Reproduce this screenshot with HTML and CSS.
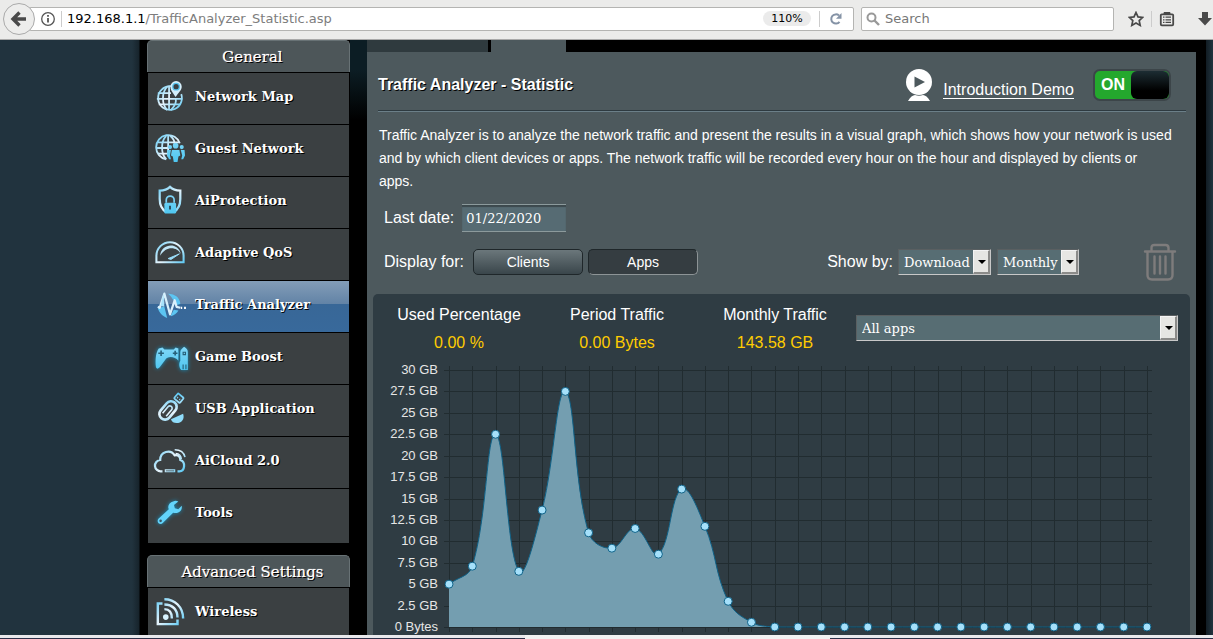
FILE: index.html
```html
<!DOCTYPE html>
<html lang="en">
<head>
<meta charset="utf-8">
<title>Traffic Analyzer - Statistic</title>
<link rel="stylesheet" href="styles.css">
</head>
<body>
<svg class="defs" width="0" height="0" aria-hidden="true">
  <defs>
    <linearGradient id="ice" x1="0" y1="0" x2="32" y2="32" gradientUnits="userSpaceOnUse">
      <stop offset="0" stop-color="#4cc4f4"/><stop offset=".5" stop-color="#e8f4fc"/><stop offset="1" stop-color="#3fc0f2"/>
    </linearGradient>
    <linearGradient id="sky" x1="0" y1="0" x2="0" y2="32" gradientUnits="userSpaceOnUse">
      <stop offset="0" stop-color="#8fdcfa"/><stop offset="1" stop-color="#4cc6f0"/>
    </linearGradient>
  </defs>
</svg>

<header class="toolbar">
  <button class="back" aria-label="Back">
    <svg width="18" height="18" viewBox="0 0 18 18"><path d="M9.500 2.500L3 9l6.500 6.500M3.500 9H16" fill="none" stroke="#4a4a4a" stroke-width="3.400"/></svg>
  </button>
  <div class="urlbar">
    <svg class="info" width="16" height="16" viewBox="0 0 16 16"><circle cx="8" cy="8" r="6.300" fill="none" stroke="#555" stroke-width="1.300"/><path d="M8 7v4.500M8 4v1.800" stroke="#555" stroke-width="1.800"/></svg>
    <span class="divider"></span>
    <p class="url"><b>192.168.1.1</b>/TrafficAnalyzer_Statistic.asp</p>
    <button class="zoom">110%</button>
    <span class="divider"></span>
    <button class="plain reload" aria-label="Reload">
      <svg width="14" height="14" viewBox="0 0 14 14"><path d="M10.500 9.800A4.600 4.600 0 1 1 10 3.600" fill="none" stroke="#8593a6" stroke-width="2"/><path d="M12.500 1v5.800H7z" fill="#8593a6"/></svg>
    </button>
  </div>
  <label class="search">
    <svg width="14" height="14" viewBox="0 0 14 14"><circle cx="5.500" cy="5.500" r="4" fill="none" stroke="#999" stroke-width="2"/><path d="M8.500 8.500L13 13" stroke="#999" stroke-width="2.400"/></svg>
    <input type="text" placeholder="Search" aria-label="Search">
  </label>
  <div class="tools">
    <button class="plain" aria-label="Bookmark">
      <svg width="16" height="16" viewBox="0 0 16 16"><path d="M8 1.500l2 4.400 4.700.5-3.500 3.200 1 4.800L8 12l-4.200 2.400 1-4.800L1.300 6.400 6 5.900z" fill="none" stroke="#484848" stroke-width="1.700"/></svg>
    </button>
    <span class="divider"></span>
    <button class="plain" aria-label="Library">
      <svg width="16" height="16" viewBox="0 0 16 16"><path d="M5 3V1.500h6V3" fill="#484848" stroke="#484848"/><rect x="1.800" y="3.300" width="12.400" height="11" rx="1" fill="none" stroke="#484848" stroke-width="1.800"/><path d="M4 6.200h1.500M6.500 6.200H12M4 8.800h1.500M6.500 8.800H12M4 11.400h1.500M6.500 11.400H12" stroke="#484848" stroke-width="1.200"/></svg>
    </button>
    <button class="plain downloads" aria-label="Downloads">
      <svg width="16" height="16" viewBox="0 0 16 16"><path d="M5 1h6v6h4l-7 7.500L1 7h4z" fill="#4a4a4a"/></svg>
    </button>
  </div>
</header>

<div class="page">
  <nav class="sidebar">
    <section class="menu">
      <h2>General</h2>
      <a href="#"><svg class="icon" viewBox="0 0 32 32"><g fill="none" stroke="url(#ice)" stroke-width="1.900"><path d="M17 5.500A12.700 12.700 0 1 0 28 14"/><path d="M13 6c-6 6-6 19 0 25M17 31c4-4 6-9 5-12M3 13h14M2 19h27M4 25h23M15 5v26"/></g><path d="M22 17c-3-5-5.500-7-5.500-11a6 6 0 0 1 12 0c0 4-3.500 6-6.500 11z" fill="#d5effb"/><circle cx="22.500" cy="6" r="3.500" fill="#3a4043" stroke="#58c4f0" stroke-width="1.400"/></svg>Network Map</a>
      <a href="#"><svg class="icon" viewBox="0 0 32 32"><g fill="none" stroke="url(#ice)" stroke-width="1.900"><path d="M12 28A13 13 0 1 1 26.500 11"/><path d="M12 3c-6 6-6 19 0 25M16 3c4 3 5 6 5 9M3 10h23M1 16h12M3 22h10M14 3v22"/></g><g fill="url(#sky)"><circle cx="22" cy="13.500" r="3"/><circle cx="16" cy="15" r="2.200"/><circle cx="28.500" cy="15" r="2.200"/><path d="M18 18h8l1 6-2 1-1 6h-4l-1-6-2-1zM13 18h4l-1 6 1 4h-2l-2-4zM27.500 18h4l.500 6-2 4h-2l1-4z"/></g></svg>Guest Network</a>
      <a href="#"><svg class="icon" viewBox="0 0 32 32"><path d="M12 29C7 26 5 21 5 15V6c5 0 8-1 11-4 3 3 6 4 11 4v9c0 6-2 11-7 14" fill="none" stroke="url(#ice)" stroke-width="2.400"/><path d="M12 19v-3a4.200 4.200 0 0 1 8.400 0v3" fill="none" stroke="#7dd3f7" stroke-width="1.800"/><rect x="10" y="19" width="12.500" height="11.500" rx="1.500" fill="url(#sky)"/><path d="M16 22v4" stroke="#2c4a5a" stroke-width="2"/></svg>AiProtection</a>
      <a href="#"><svg class="icon" viewBox="0 0 32 32"><path d="M1.500 27v-7a14.500 14.500 0 0 1 29 0v7z" fill="none" stroke="url(#ice)" stroke-width="2.200"/><path d="M5.500 20c1-13 19-15 22-2-4-8-16-9-22 2z" fill="#bfe6f8"/><path d="M14 23l12-5-9 6z" fill="#9adcf8" stroke="#9adcf8"/></svg>Adaptive QoS</a>
      <a href="#" class="current"><svg class="icon" viewBox="0 0 32 32"><path d="M14 5a12 12 0 0 1 13 11l-4 1-6-9zM3 20l7-1 3 12C8 29 4 25 3 20zM17 28l3-6 5 1c-2 3-4 5-8 6z" fill="#5cc5f2"/><path d="M3 19l2 1L10 5l6 22 5-15 2 7 4 1" fill="none" stroke="#d8f0fc" stroke-width="2.400" stroke-linejoin="round"/><path d="M9 5l-3 13 4 1z" fill="#a7e2fb"/><path d="M27.500 20h1.500M31 20h2" stroke="#fff" stroke-width="2.400"/></svg>Traffic Analyzer</a>
      <a href="#"><svg class="icon glow" viewBox="0 0 32 32"><path d="M1 28c-1-8 0-16 3-20l4-1 2 2h10l2-2 3 1v13c-4-5-12-5-14-1l-6 8c-2 2-3 2-4 0z" fill="url(#sky)"/><path d="M27 21V12c0-3 2-4 4-6 3 2 4 3 4 6v19h-7c-2-2-3-7-1-10z" fill="url(#sky)"/><path d="M3.500 13h6M6.500 10v6M19 13h5M21.500 10.500v5" stroke="#27617a" stroke-width="1.700"/><path d="M26 8v13M30 12h2.500v2.500H30zM30 25v5M33 25v5" fill="none" stroke="#27617a" stroke-width="1.200"/></svg>Game Boost</a>
      <a href="#"><svg class="icon" viewBox="0 0 32 32"><g transform="translate(0 4) rotate(40 14 16)" fill="none" stroke="url(#ice)"><rect x="7" y="4" width="12" height="22" rx="6" stroke-width="2.800"/><path d="M10.500 21V12a2.500 2.500 0 0 1 5 0v9" stroke-width="1.700"/><rect x="9.500" y="-6" width="8" height="7" rx="1" stroke-width="1.900"/><path d="M12 -3v2M15 -3v2"/></g><path d="M17 28l13-6c2 6-2 10-7 10-3 0-5-1-6-4z" fill="#8fdcfa"/></svg>USB Application</a>
      <a href="#"><svg class="icon" viewBox="0 0 32 32"><g fill="none" stroke="url(#ice)" stroke-width="2.400"><path d="M8 28H6.500a6 6 0 0 1-1-12c0-9 11-12 15.500-5 4-1 6 2 6 5 6 2 5 12-1 12h-2"/><path d="M11 26.500h10v2H11z" stroke-width="1.200"/><path d="M22 9c4 0 6 3 6 6M21 5c6 0 10 3 11 8" stroke-width="1.600"/></g></svg>AiCloud 2.0</a>
      <a href="#"><svg class="icon glow" viewBox="0 0 32 32"><g transform="translate(0 2) scale(.92)"><path d="M21 3c2-1 4-1 6 0l-5 4 1 4 4 1 4-4c1 6-4 10-10 8L9 28c-3 3-8-1-5-5L16 12c-2-4 1-8 5-9z" fill="#63d4fb"/><circle cx="6.500" cy="25.500" r="1.500" fill="#3a5766"/></g></svg>Tools</a>
    </section>
    <section class="menu">
      <h2>Advanced Settings</h2>
      <a href="#"><svg class="icon" viewBox="0 0 32 32"><g fill="none" stroke="url(#ice)" stroke-width="2.600"><path d="M8 8H3v22h21v-5"/><path d="M10 3.500c11 0 20 8 20 20.500M10 9c9 0 14 6 14 14M10 14c6 0 8 4 8 10"/></g><circle cx="11.500" cy="22.500" r="3" fill="#d8f2fd"/></svg>Wireless</a>
    </section>
  </nav>

  <main class="main">
    <div class="tabs"><span class="tab"></span><span class="tab active"></span></div>
    <div class="panel">
      <div class="heading">
        <h1>Traffic Analyzer - Statistic</h1>
        <a class="demo" href="#"><svg width="28" height="34" viewBox="0 0 28 34"><circle cx="14" cy="14" r="13" fill="#fff"/><path d="M9.500 8.500L20 14 9.500 19.500z" fill="#4d595d"/><path d="M3 33c2-4 5-6 7-6q4 1.500 8 0c2 0 5 2 7 6z" fill="#fff"/></svg><span>Introduction Demo</span></a>
        <label class="toggle"><input type="checkbox" checked aria-label="Traffic Analyzer"><span class="state">ON</span><span class="knob"></span></label>
      </div>
      <p class="intro">Traffic Analyzer is to analyze the network traffic and present the results in a visual graph, which shows how your network is used and by which client devices or apps. The network traffic will be recorded every hour on the hour and displayed by clients or apps.</p>
      <div class="row date">
        <label for="last-date">Last date:</label>
        <input id="last-date" type="text" value="01/22/2020">
      </div>
      <div class="row display">
        <span class="caption">Display for:</span>
        <button class="seg">Clients</button>
        <button class="seg pressed">Apps</button>
        <label class="show" for="direction">Show by:</label>
        <span class="select"><select id="direction"><option>Download</option></select></span>
        <span class="select"><select aria-label="Period"><option>Monthly</option></select></span>
        <button class="plain trash" aria-label="Delete">
          <svg width="34" height="38" viewBox="0 0 34 38"><g fill="none" stroke="#7e7c7c" stroke-width="2.400" stroke-linecap="round"><path d="M2 8.500h30M8.500 8V5q0-3 3-3h11q3 0 3 3v3M4.500 9v23q0 4.500 4.500 4.500h16q4.500 0 4.500-4.500V9M11.500 13.500v17M17 13.500v17M22.500 13.500v17"/></g></svg>
        </button>
      </div>
      <section class="chart">
        <div class="summary">
          <dl><dt>Used Percentage</dt><dd>0.00 %</dd></dl>
          <dl><dt>Period Traffic</dt><dd>0.00 Bytes</dd></dl>
          <dl><dt>Monthly Traffic</dt><dd>143.58 GB</dd></dl>
          <span class="select wide"><select aria-label="Application"><option>All apps</option></select></span>
        </div>
        <svg id="plot" class="plot" viewBox="0 0 817 300" role="img" aria-label="Monthly download traffic"></svg>
      </section>
    </div>
  </main>
</div>
<footer class="taskbar"><span></span></footer>
<script src="chart.js"></script>
</body>
</html>
```
FILE: chart.js
```js
const used = [5, 7.1, 22.5, 6.5, 13.65, 27.5, 11, 9.2, 11.5, 8.5, 16.1, 11.75, 3, 0.55];
const days = 31;
const left = 76;
const top0 = 8;
const step = 698 / (days - 1);
const unit = 257 / 30;
const base = top0 + 257;
const plot = document.getElementById('plot');

const points = Array.from({ length: days }, (_, i) => [left + i * step, base - (used[i] || 0) * unit]);

function add(name, attrs, text) {
  const el = document.createElementNS('http://www.w3.org/2000/svg', name);
  for (const key in attrs) el.setAttribute(key, attrs[key]);
  if (text) el.textContent = text;
  plot.appendChild(el);
}

for (let i = 0; i < days; i++) {
  const x = Math.round(left + i * step) + 0.5;
  add('path', { class: 'grid', d: `M${x} ${top0 - 4}V${base + 5}` });
}
for (let gb = 0; gb <= 30; gb += 2.5) {
  const y = Math.round(base - gb * unit) + 0.5;
  add('path', { class: 'grid', d: `M${left - 5} ${y}H${left + 703}` });
  add('text', { class: 'tick', x: 65, y: y + 3 }, gb ? `${gb} GB` : '0 Bytes');
}

const clamp = (y) => Math.min(base, Math.max(top0, y));
const controls = points.map((p, i) => {
  const a = points[i - 1] || p;
  const b = points[i + 1] || p;
  const d1 = Math.hypot(p[0] - a[0], p[1] - a[1]);
  const d2 = Math.hypot(b[0] - p[0], b[1] - p[1]);
  const f1 = 0.4 * d1 / (d1 + d2);
  const f2 = 0.4 * d2 / (d1 + d2);
  return {
    before: [p[0] - f1 * (b[0] - a[0]), clamp(p[1] - f1 * (b[1] - a[1]))],
    after: [p[0] + f2 * (b[0] - a[0]), clamp(p[1] + f2 * (b[1] - a[1]))],
  };
});

let line = `M${points[0]}`;
for (let i = 1; i < days; i++) {
  line += `C${controls[i - 1].after} ${controls[i].before} ${points[i]}`;
}
add('path', { class: 'area', d: `${line}V${base}H${left}Z` });
add('path', { class: 'line', d: line });
points.forEach(([cx, cy]) => add('circle', { class: 'dot', cx, cy, r: 4 }));
```
FILE: styles.css
```css
* { box-sizing: border-box; }

body {
  margin: 0;
  height: 100vh;
  display: flex;
  flex-direction: column;
  overflow: hidden;
  background: #000;
  color: #fff;
  font-family: "Liberation Sans", Arial, sans-serif;
  font-size: 16px;
}

h1, h2, p, dl, dd { margin: 0; }
button, input, select { font: inherit; color: inherit; }
svg { display: block; flex: none; }
.defs { position: absolute; }
.plain { display: flex; padding: 0; border: 0; background: none; }

/* Browser toolbar */
.toolbar {
  flex: none;
  display: flex;
  align-items: center;
  height: 40px;
  padding: 0 0 2px 3px;
  background: #ebebea;
  border-bottom: 1px solid #a9a9a9;
  color: #000;
  font-family: "DejaVu Sans", sans-serif;
  font-size: 13px;
}
.back {
  position: relative;
  z-index: 1;
  display: flex;
  align-items: center;
  justify-content: center;
  flex: none;
  width: 32px;
  height: 32px;
  padding: 0;
  border: 1px solid #aaa;
  border-radius: 50%;
  background: #ededec;
}
.urlbar, .search {
  display: flex;
  align-items: center;
  height: 24px;
  border: 1px solid #b4b4b2;
  border-radius: 2px;
  background: #fff;
}
.urlbar {
  flex: 1;
  gap: 5px;
  margin-left: -6px;
  padding: 0 10px 0 10px;
}
.divider { flex: none; width: 1px; height: 16px; background: #ccc; }
.url { flex: 1; color: #7d7d7d; white-space: nowrap; }
.url b { color: #000; font-weight: 400; }
.zoom {
  width: 48px;
  height: 15px;
  margin-right: 3px;
  padding: 0;
  border: 0;
  border-radius: 8px;
  background: #ebebeb;
  font-size: 11px;
  line-height: 15px;
}
.reload { margin-left: 4px; }
.search { width: 253px; margin-left: 7px; padding: 0 4px; gap: 5px; }
.search input { flex: 1; min-width: 0; padding: 0; border: 0; outline: 0; background: none; }
.search input::placeholder { color: #777; opacity: 1; }
.tools { display: flex; align-items: center; gap: 7px; margin-left: 14px; }
.downloads { margin-left: 15px; }

/* Router page */
.page {
  flex: 1;
  min-height: 0;
  display: grid;
  grid-template-columns: 203px minmax(0, 1fr);
  column-gap: 17px;
  padding: 0 17px 0 147px;
  overflow: hidden;
  background:
    linear-gradient(90deg, #111c23, #21333e) right / 7px 100% no-repeat,
    linear-gradient(90deg, #21333e 132px, #17242c 139px, #000 140px) left / 140px 100% no-repeat,
    linear-gradient(#0c1d24 30px, #000 80px) 350px 0 / 17px 100% no-repeat,
    #000;
}
.menu { margin-bottom: 12px; }
.menu h2 {
  height: 32px;
  padding-left: 8px;
  border: 1px solid #687275;
  border-bottom: 0;
  border-radius: 5px 5px 0 0;
  background: #4d5659;
  font: 15px/32px "DejaVu Serif", serif;
  text-align: center;
  text-shadow: 1px 1px 0 #000, 0 0 1px #fff;
}
.menu a {
  display: flex;
  gap: 10px;
  height: 52px;
  margin: 0 1px;
  padding: 8px 7px 0;
  border-top: 1px solid #000;
  background: #3b4042;
  color: #fff;
  font: bold 13px/32px "DejaVu Serif", serif;
  text-decoration: none;
  text-shadow: 1px 1px 0 #000;
}
.menu a:last-child { height: 55px; }
.menu a.current { background: linear-gradient(#839db8, #6283a6 45%, #386797 46%, #38699b); }
.icon { width: 30px; height: 30px; overflow: visible; }
.glow { filter: drop-shadow(0 0 2px #168fbd); }

.tabs { display: flex; gap: 3px; height: 12px; }
.tab { width: 121px; background: #2f3a3e; }
.tab.active { width: 75px; background: #4d595d; }
.panel { padding: 0 6px; background: #4d595d; }
.heading {
  display: flex;
  align-items: center;
  height: 60px;
  margin: 0 4px 0 5px;
  padding-top: 7px;
  border-bottom: 1px solid #6b7f88;
  box-shadow: inset 0 -1px 0 #2e3a40;
}
h1 { flex: 1; font-size: 16px; text-shadow: 1px 1px 0 #000; }
.demo { display: flex; align-items: center; gap: 10px; color: #fff; text-decoration: none; }
.demo span { margin-top: 10px; border-bottom: 1px solid #fff; line-height: 17px; }
.toggle {
  display: flex;
  width: 78px;
  height: 32px;
  margin: 0 15px 0 19px;
  border: 2px solid #3c4549;
  border-radius: 7px;
  background: #24a82d;
}
.toggle input { position: absolute; opacity: 0; }
.state { flex: 1; font-weight: bold; line-height: 28px; text-align: center; }
.knob { width: 38px; border-radius: 6px; background: linear-gradient(#1d2d33, #000 70%); }
.intro { margin: 12px 17px 0 6px; font-size: 14px; line-height: 23px; }
.row { display: flex; align-items: center; padding-left: 11px; }
.date { gap: 8px; margin-top: 11px; }
.date input {
  width: 104px;
  height: 28px;
  padding: 0 4px;
  border: 0;
  border-top: 1px solid #8c9a9c;
  border-bottom: 1px solid #8c9a9c;
  background: #566b73;
  box-shadow: inset 0 2px 1px #3c494d;
  font: 13px "DejaVu Serif", serif;
}
.display { gap: 5px; margin-top: 10px; height: 40px; padding-right: 13px; }
.caption { margin-right: 4px; }
.seg {
  width: 110px;
  height: 26px;
  padding: 0;
  border: 1px solid #1f272a;
  border-radius: 5px;
  background: linear-gradient(#6b777b, #3a464b);
  font-size: 14px;
}
.seg.pressed { background: #353d41; border-right-color: #8d9496; border-bottom-color: #8d9496; }
.show { margin-left: auto; }
.select { position: relative; display: inline-flex; width: 93px; }
.select + .select { width: 82px; margin: 0 59px 0 1px; }
.select select {
  appearance: none;
  width: 100%;
  height: 26px;
  padding: 0 15px 0 5px;
  border: 1px solid #c8c8c8;
  border-top-color: #5a5f61;
  border-left-color: #5a5f61;
  border-radius: 0;
  background: #576d73;
  font: 13px "DejaVu Serif", serif;
}
.select::after {
  content: "";
  position: absolute;
  top: 1px;
  right: 1px;
  bottom: 1px;
  width: 14px;
  border: 1px solid #f4f4f4;
  border-right: 2px solid #8b8b89;
  border-bottom: 2px solid #8b8b89;
  background: #e6e6e3;
  pointer-events: none;
}
.select::before {
  content: "";
  position: absolute;
  z-index: 1;
  top: 11px;
  right: 5px;
  border: 4px solid transparent;
  border-top-color: #000;
  border-bottom: 0;
  pointer-events: none;
}

.chart { margin-top: 12px; border-radius: 5px; background: #2f3c43; overflow: hidden; }
.summary {
  display: grid;
  grid-template-columns: 158px 158px 158px minmax(0, 1fr);
  padding: 11px 12px 0 7px;
  text-align: center;
}
.summary dl { line-height: 19px; }
.summary dd { margin-top: 9px; color: #fc0; }
.select.wide { width: auto; margin: 10px 0 0 2px; align-self: start; }
.plot { width: 100%; height: auto; margin-top: 10px; }
.grid { stroke: #212c30; stroke-width: 1; }
.tick { fill: #e6e6e6; font-size: 13px; text-anchor: end; }
.area { fill: #749eb0; }
.line { fill: none; stroke: #0f6288; stroke-width: 1; }
.dot { fill: #a5e0fa; stroke: #0f6288; stroke-width: 1; }

/* Desktop taskbar edge */
.taskbar { flex: none; height: 4px; background: #e9e9ec; border-bottom: 1px solid #2c3048; }
.taskbar span { display: block; width: 305px; height: 4px; margin-left: 525px; background: #f2f2f2; }
```
